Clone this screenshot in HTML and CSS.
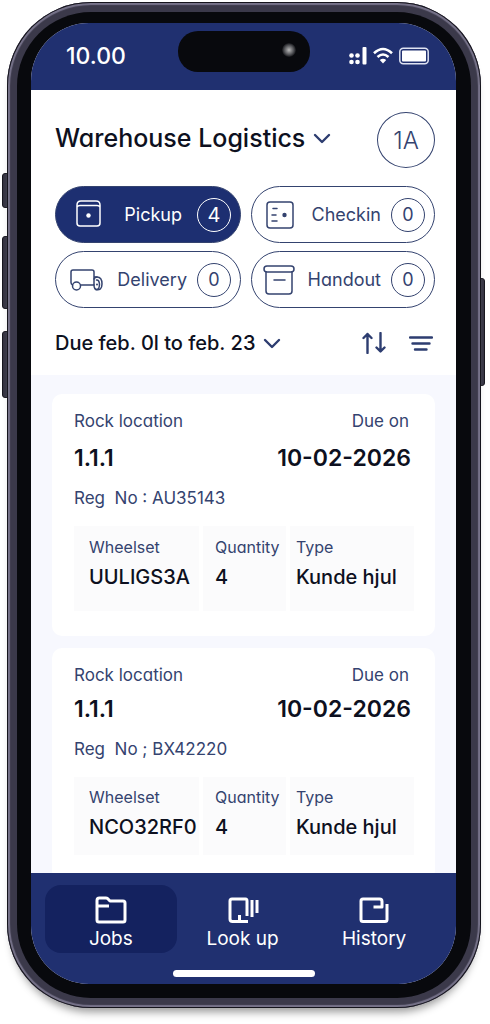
FILE: index.html
```html
<!DOCTYPE html>
<html lang="en">
<head>
<meta charset="utf-8">
<meta name="viewport" content="width=device-width, initial-scale=1">
<title>Warehouse Logistics</title>
<link rel="stylesheet" href="styles.css">
</head>
<body>
<div class="device">
  <span class="key key-action"></span>
  <span class="key key-up"></span>
  <span class="key key-down"></span>
  <span class="key key-power"></span>
  <div class="bezel">
    <div class="screen">
      <div class="status">
        <span class="time">10.00</span>
        <span class="island"><span class="lens"></span></span>
        <span class="signals">
          <svg width="18" height="18" viewBox="0 0 18 18" fill="#fff"><circle cx="2.5" cy="8.500" r="2.300"/><circle cx="8.500" cy="8.500" r="2.300"/><circle cx="2.500" cy="15" r="2.300"/><circle cx="8.500" cy="15" r="2.300"/><rect x="13.500" y="0" width="4" height="17.500" rx="1"/></svg>
          <svg width="20" height="18" viewBox="0 0 20 18" fill="none" stroke="#fff" stroke-width="2.600"><path d="M1 6.200Q10-2.200 19 6.200M4.500 10Q10 5 15.500 10"/><path d="M10 16.500L6.800 13Q10 10.300 13.200 13Z" fill="#fff" stroke="none"/></svg>
          <svg width="30" height="18" viewBox="0 0 30 18"><rect x="0.800" y="1.300" width="28.400" height="15.400" rx="3.500" fill="none" stroke="#dfe3f2" stroke-width="1.500"/><rect x="3" y="3.500" width="24" height="11" rx="1" fill="#fff"/></svg>
        </span>
      </div>
      <header class="top">
        <div class="row">
          <button class="picker title" type="button">Warehouse Logistics
            <svg width="18" height="18" viewBox="0 0 18 18"><path d="M2 6L9 13L16 6"/></svg>
          </button>
          <button class="avatar" type="button">1A</button>
        </div>
        <div class="filters">
          <button class="pill active" type="button">
            <svg width="25" height="30" viewBox="0 0 25 30"><path d="M1 5Q1 1 5 1H20Q24 1 24 5V23Q24 26 21 26H4Q1 26 1 23ZM1 7Q2 5.500 4 5.500H21Q23 5.500 24 7"/><circle cx="12.500" cy="15.500" r="2.200" class="dot"/></svg>
            <span>Pickup</span><span class="count">4</span>
          </button>
          <button class="pill" type="button">
            <svg width="28" height="28" viewBox="0 0 28 28"><rect x="1" y="1" width="26" height="26" rx="3"/><path d="M7 7.500H11M6 14H10M6 20H11"/><circle cx="18.500" cy="14" r="2.200" class="dot"/></svg>
            <span>Checkin</span><span class="count">0</span>
          </button>
          <button class="pill" type="button">
            <svg width="33" height="24" viewBox="0 0 33 24"><path d="M2.500 17Q1 16 1 14.500V4Q1 2 3 2H22Q24 2 24 4V17H11M24 9H27"/><circle cx="6.500" cy="18" r="4"/><path d="M25.500 21.500Q32 23 32 16Q32 9 27 9Q25 9 24 11"/><path d="M24 17Q24 21.500 27 21.500Q29.500 21 29.500 16Q29 11.500 26.500 12"/><circle cx="27" cy="16.500" r="1" class="dot"/></svg>
            <span>Delivery</span><span class="count">0</span>
          </button>
          <button class="pill" type="button">
            <svg width="32" height="30" viewBox="0 0 32 30"><rect x="1" y="1" width="30" height="6" rx="3"/><path d="M3 7V26Q3 29 6 29H26Q29 29 29 26V7M11 15H22"/></svg>
            <span>Handout</span><span class="count">0</span>
          </button>
        </div>
        <div class="row">
          <button class="picker range" type="button">Due feb. 0l to feb. 23
            <svg width="18" height="18" viewBox="0 0 18 18"><path d="M2 6L9 13L16 6"/></svg>
          </button>
          <div class="tools">
            <button type="button" aria-label="Sort"><svg width="24" height="22" viewBox="0 0 24 22"><path d="M5.500 21V2M1.500 6L5.500 2L9.500 6M18.500 1V19M14.500 15.500L18.500 19.500L22.500 15.500"/></svg></button>
            <button type="button" aria-label="Filter"><svg width="24" height="22" viewBox="0 0 24 22"><path d="M1 5.500H23M3.500 11.500H20.500M6 17.500H17.500"/></svg></button>
          </div>
        </div>
      </header>
      <main class="jobs">
        <article class="card">
          <div class="pair"><span>Rock location</span><span>Due on</span></div>
          <div class="pair strong"><span>1.1.1</span><span>10-02-2026</span></div>
          <p class="reg">Reg &nbsp;No : AU35143</p>
          <dl class="facts">
            <div><dt>Wheelset</dt><dd>UULIGS3A</dd></div>
            <div><dt>Quantity</dt><dd>4</dd></div>
            <div><dt>Type</dt><dd>Kunde hjul</dd></div>
          </dl>
        </article>
        <article class="card compact">
          <div class="pair"><span>Rock location</span><span>Due on</span></div>
          <div class="pair strong"><span>1.1.1</span><span>10-02-2026</span></div>
          <p class="reg">Reg &nbsp;No ; BX42220</p>
          <dl class="facts">
            <div><dt>Wheelset</dt><dd>NCO32RF0</dd></div>
            <div><dt>Quantity</dt><dd>4</dd></div>
            <div><dt>Type</dt><dd>Kunde hjul</dd></div>
          </dl>
        </article>
      </main>
      <nav class="tabs">
        <a class="tab current" href="#jobs"><svg width="32" height="28" viewBox="0 0 32 28"><path d="M2 24V4.500Q2 2 4.500 2H11Q12.500 2 13.500 3.500L15 5H28Q30 5 30 7V24Q30 26 28 26H4Q2 26 2 24ZM2 10H14"/></svg>Jobs</a>
        <a class="tab" href="#lookup"><svg width="36" height="28" viewBox="0 0 36 28"><path d="M24 25.500H8.500Q6 25.500 6 23V5Q6 3 8 3H21.500Q23 3 23 5V20M15.500 19V25.500M28 4V21M33 4V17"/></svg>Look up</a>
        <a class="tab" href="#history"><svg width="32" height="28" viewBox="0 0 32 28"><path d="M29 8V23.500Q29 25.500 27 25.500H5Q3 25.500 3 23.500V5Q3 3 5 3H21.500Q24 3 24 5.500V11H15.500"/></svg>History</a>
      </nav>
      <div class="home"><span></span></div>
    </div>
  </div>
</div>
</body>
</html>
```
FILE: styles.css
```css
* { box-sizing: border-box; }
body {
  margin: 0;
  background: #fff;
  color: #0d1020;
  font-family: Inter, "Liberation Sans", sans-serif;
  font-feature-settings: "cv11";
}
button {
  font: inherit;
  font-feature-settings: inherit;
  color: inherit;
  background: none;
  border: 0;
  padding: 0;
  cursor: pointer;
}
svg { flex: none; }
.device {
  position: relative;
  height: calc(100vh - 18px);
  margin: 2px 9px 16px 7px;
  padding: 10px;
  border-radius: 84px;
  background: #3b394a;
  box-shadow: inset 0 0 0 1px #15141c, inset 0 0 1px 3px #77738a, 0 9px 8px -5px #999;
}
.key {
  position: absolute;
  z-index: -1;
  width: 8px;
  background: #343241;
  border: 1px solid #17161e;
  border-radius: 3px;
}
.key-action { left: -5px; top: 171px; height: 35px; }
.key-up { left: -5px; top: 234px; height: 73px; }
.key-down { left: -5px; top: 329px; height: 67px; }
.key-power { right: -4px; top: 276px; height: 108px; }
.bezel {
  height: 100%;
  padding: 11px 15px 14px 14px;
  border-radius: 74px;
  background: #08090d;
}
.screen {
  display: flex;
  flex-direction: column;
  height: 100%;
  border-radius: 58px;
  overflow: hidden;
  background: #f7f8fe;
}
.status {
  flex: none;
  display: grid;
  grid-template-columns: 1fr 132px 1fr;
  align-items: center;
  height: 67px;
  padding: 0 27px 2px 35px;
  background: #203070;
  color: #fff;
}
.time { font-size: 23px; font-weight: 500; }
.island {
  display: flex;
  align-items: flex-start;
  justify-content: flex-end;
  width: 132px;
  height: 41px;
  margin: 0 0 8px -4px;
  padding: 12px 14px 0 0;
  border-radius: 20px;
  background: #08090d;
}
.lens {
  width: 14px;
  height: 14px;
  border-radius: 50%;
  background: radial-gradient(circle, #bbb, #55565a 45%, #08090d 75%);
}
.signals { display: flex; justify-content: flex-end; gap: 6px; }
.top {
  flex: none;
  padding: 22px 21px 20px 24px;
  background: #fff;
}
.row { display: flex; justify-content: space-between; align-items: center; }
.picker { display: flex; align-items: center; gap: 8px; white-space: nowrap; }
.picker svg, .tools svg { fill: none; stroke: #2d3d70; stroke-width: 2.4; stroke-linecap: round; stroke-linejoin: round; }
.title { padding-bottom: 4px; font-size: 25px; font-weight: 500; }
.range { font-size: 20px; font-weight: 500; }
.avatar {
  width: 58px;
  height: 56px;
  border: 1px solid #34436f;
  border-radius: 50%;
  color: #34436f;
  font-size: 24px;
  font-weight: 300;
}
.filters {
  display: grid;
  grid-template-columns: minmax(0, 186fr) minmax(0, 184fr);
  gap: 8px 10px;
  margin: 18px 0 23px;
}
.pill {
  display: flex;
  align-items: center;
  gap: 10px;
  height: 57px;
  padding: 0 9px 0 14px;
  border: 1px solid #34436f;
  border-radius: 29px;
  color: #34436f;
  font-size: 18px;
}
.pill svg { margin-right: auto; fill: none; stroke: currentColor; stroke-width: 1.5; stroke-linecap: round; stroke-linejoin: round; }
.pill:last-child { padding-left: 11px; }
.pill .dot { fill: currentColor; stroke: none; }
.pill.active { gap: 15px; padding-left: 20px; background: #1d2f71; color: #fff; }
.count {
  display: grid;
  place-items: center;
  flex: none;
  width: 34px;
  height: 34px;
  border: 1px solid currentColor;
  border-radius: 50%;
}
.active .count { font-size: 20px; }
.tools { display: flex; gap: 23px; padding-right: 2px; }
.tools button { display: flex; }
.jobs {
  flex: 1;
  min-height: 0;
  overflow: hidden;
  display: flex;
  flex-direction: column;
  gap: 12px;
  padding: 19px 21px 0;
}
.card {
  flex: none;
  padding: 16px 21px 25px 22px;
  border-radius: 10px;
  background: #fff;
}
.pair { display: flex; justify-content: space-between; padding-right: 5px; color: #34436f; font-size: 17px; line-height: 22px; }
.strong { margin-top: 11px; padding-right: 3px; color: #0d1020; font-size: 23px; font-weight: 600; line-height: 30px; }
.reg { margin: 14px 0 17px; color: #34436f; font-size: 17px; line-height: 22px; }
.facts { display: grid; grid-template-columns: 125px 83px 1fr; gap: 4px; margin: 0; }
.facts div { padding: 9px 0 21px 12px; background: #fbfbfc; }
.facts div:first-child { padding-left: 15px; }
.facts div:last-child { padding-left: 6px; }
.facts dt { color: #34436f; font-size: 16px; line-height: 24px; }
.facts dd { margin: 5px 0 0; font-size: 20px; font-weight: 500; line-height: 26px; white-space: nowrap; }
.compact .strong { margin-top: 8px; }
.compact .facts div { padding-top: 8px; padding-bottom: 15px; }
.tabs {
  flex: none;
  display: grid;
  grid-template-columns: repeat(3, 1fr);
  padding: 12px 16px 0 14px;
  background: #203070;
}
.tab {
  display: flex;
  flex-direction: column;
  align-items: center;
  height: 68px;
  padding-top: 11px;
  border-radius: 16px;
  color: #fff;
  font-size: 19px;
  line-height: 30px;
  text-decoration: none;
}
.tab.current { background: #14225f; }
.tab svg { fill: none; stroke: #fff; stroke-width: 3; stroke-linejoin: round; }
.home { flex: none; display: flex; justify-content: center; height: 31px; padding-top: 17px; background: #203070; }
.home span { width: 142px; height: 7px; border-radius: 4px; background: #fff; }
```
